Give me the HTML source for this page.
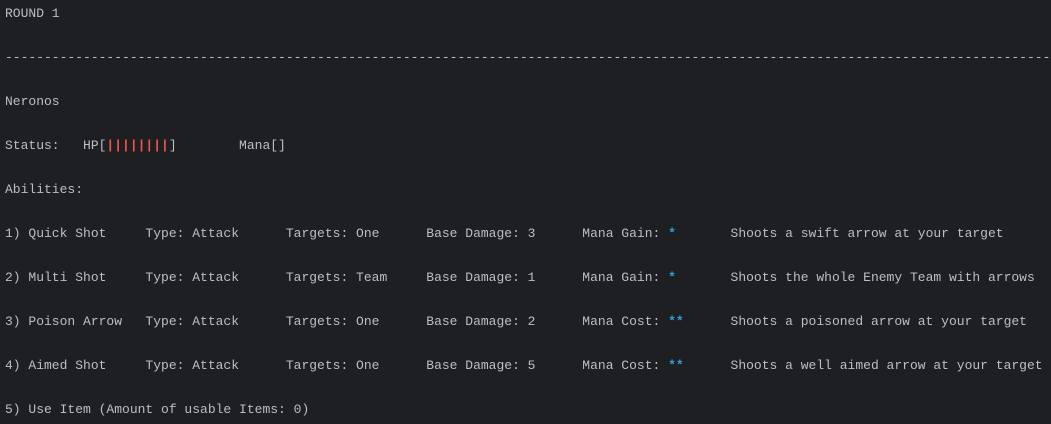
<!DOCTYPE html>
<html><head><meta charset="utf-8"><style>
html,body{margin:0;padding:0;background:#1e1f22;width:1051px;height:424px;overflow:hidden}
pre{margin:0;padding:3px 0 0 5px;font-family:"Liberation Mono",monospace;font-size:13px;line-height:22px;color:#bcbec4;white-space:pre}
.r{color:#f0524f;font-weight:bold}.b{color:#2fa0d8;font-weight:bold}
</style></head><body><pre>ROUND 1

--------------------------------------------------------------------------------------------------------------------------------------

Neronos

Status:   HP[<span class="r">||||||||</span>]        Mana[]

Abilities:

1) Quick Shot     Type: Attack      Targets: One      Base Damage: 3      Mana Gain: <span class="b">*</span>       Shoots a swift arrow at your target

2) Multi Shot     Type: Attack      Targets: Team     Base Damage: 1      Mana Gain: <span class="b">*</span>       Shoots the whole Enemy Team with arrows

3) Poison Arrow   Type: Attack      Targets: One      Base Damage: 2      Mana Cost: <span class="b">**</span>      Shoots a poisoned arrow at your target

4) Aimed Shot     Type: Attack      Targets: One      Base Damage: 5      Mana Cost: <span class="b">**</span>      Shoots a well aimed arrow at your target

5) Use Item (Amount of usable Items: 0)</pre></body></html>
